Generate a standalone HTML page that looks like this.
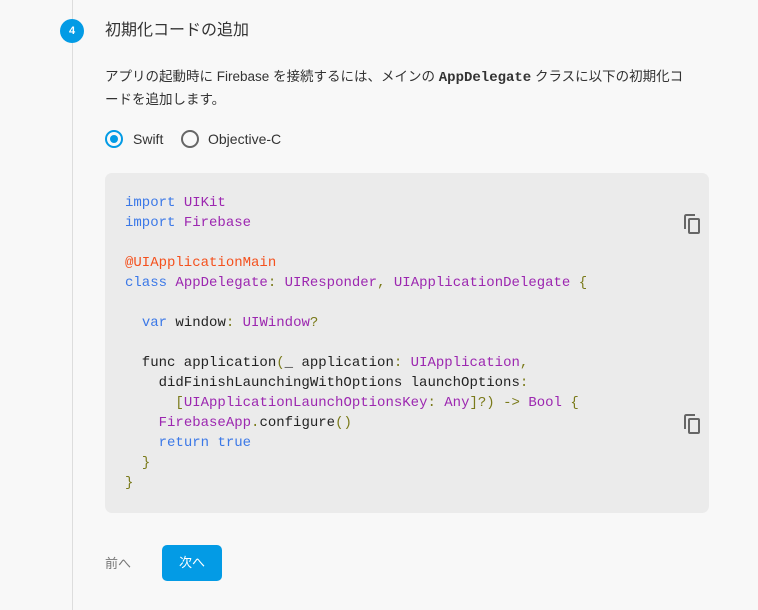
<!DOCTYPE html>
<html><head><meta charset="utf-8"><style>
body{margin:0;width:758px;height:610px;background:#f8f8f8;font-family:"Liberation Sans","Noto Sans CJK JP",sans-serif;color:#333;position:relative;overflow:hidden}
.vl{position:absolute;left:72px;top:0;width:1px;height:610px;background:#ddd}
.circ{position:absolute;left:60px;top:19px;width:24px;height:24px;border-radius:50%;background:#039be5;color:#fff;font-size:11px;font-weight:bold;text-align:center;line-height:24px}
.title{position:absolute;left:105px;top:20px;font-size:16px;color:#333;line-height:22px}
.desc{position:absolute;left:105px;top:66px;width:588px;font-size:13.5px;line-height:22px;color:#333}
.desc code{font-family:"Liberation Mono",monospace;font-weight:bold;font-size:14px}
.radio{position:absolute;top:129px;font-size:14px;line-height:20px}
.rc{position:absolute;top:130px;width:18px;height:18px;border-radius:50%;border:2px solid #666;box-sizing:border-box}
.box{position:absolute;left:105px;top:173px;width:604px;height:340px;background:#ebebeb;border-radius:7px}
pre{position:absolute;left:125px;top:193px;margin:0;font-family:"Liberation Mono",monospace;font-size:14px;line-height:20px;color:#222}
.k{color:#3b78e7}.t{color:#9c27b0}.a{color:#f4511e}.p{color:#7a7a1a}
.cp{position:absolute;left:682px}
.prev{position:absolute;left:105px;top:553px;font-size:13px;color:#777}
.next{position:absolute;left:162px;top:545px;width:60px;height:36px;border-radius:5px;background:#039be5;color:#fff;font-size:13px;text-align:center;line-height:36px}
</style></head><body>
<div class="vl"></div>
<div class="circ">4</div>
<div class="title">初期化コードの追加</div>
<div class="desc">アプリの起動時に Firebase を接続するには、メインの <code>AppDelegate</code> クラスに以下の初期化コ<br>ードを追加します。</div>
<div class="rc" style="left:105px;border-color:#039be5"><div style="position:absolute;left:3px;top:3px;width:8px;height:8px;border-radius:50%;background:#039be5"></div></div>
<div class="radio" style="left:133px">Swift</div>
<div class="rc" style="left:181px"></div>
<div class="radio" style="left:208px">Objective-C</div>
<div class="box"></div>
<pre><span class="k">import</span> <span class="t">UIKit</span>
<span class="k">import</span> <span class="t">Firebase</span>

<span class="a">@UIApplicationMain</span>
<span class="k">class</span> <span class="t">AppDelegate</span><span class="p">:</span> <span class="t">UIResponder</span><span class="p">,</span> <span class="t">UIApplicationDelegate</span> <span class="p">{</span>

  <span class="k">var</span> window<span class="p">:</span> <span class="t">UIWindow</span><span class="p">?</span>

  func application<span class="p">(</span>_ application<span class="p">:</span> <span class="t">UIApplication</span><span class="p">,</span>
    didFinishLaunchingWithOptions launchOptions<span class="p">:</span>
      <span class="p">[</span><span class="t">UIApplicationLaunchOptionsKey</span><span class="p">:</span> <span class="t">Any</span><span class="p">]?)</span> <span class="p">-&gt;</span> <span class="t">Bool</span> <span class="p">{</span>
    <span class="t">FirebaseApp</span><span class="p">.</span>configure<span class="p">()</span>
    <span class="k">return</span> <span class="k">true</span>
  <span class="p">}</span>
<span class="p">}</span></pre>
<svg class="cp" style="top:213px" width="20" height="22" viewBox="0 0 20 22"><path d="M3 16V3.5Q3 2 4.5 2H13" fill="none" stroke="#666" stroke-width="2"/><rect x="7" y="6" width="10" height="14" rx="1" fill="none" stroke="#666" stroke-width="2"/></svg>
<svg class="cp" style="top:413px" width="20" height="22" viewBox="0 0 20 22"><path d="M3 16V3.5Q3 2 4.5 2H13" fill="none" stroke="#666" stroke-width="2"/><rect x="7" y="6" width="10" height="14" rx="1" fill="none" stroke="#666" stroke-width="2"/></svg>
<div class="prev">前へ</div>
<div class="next">次へ</div>
</body></html>
